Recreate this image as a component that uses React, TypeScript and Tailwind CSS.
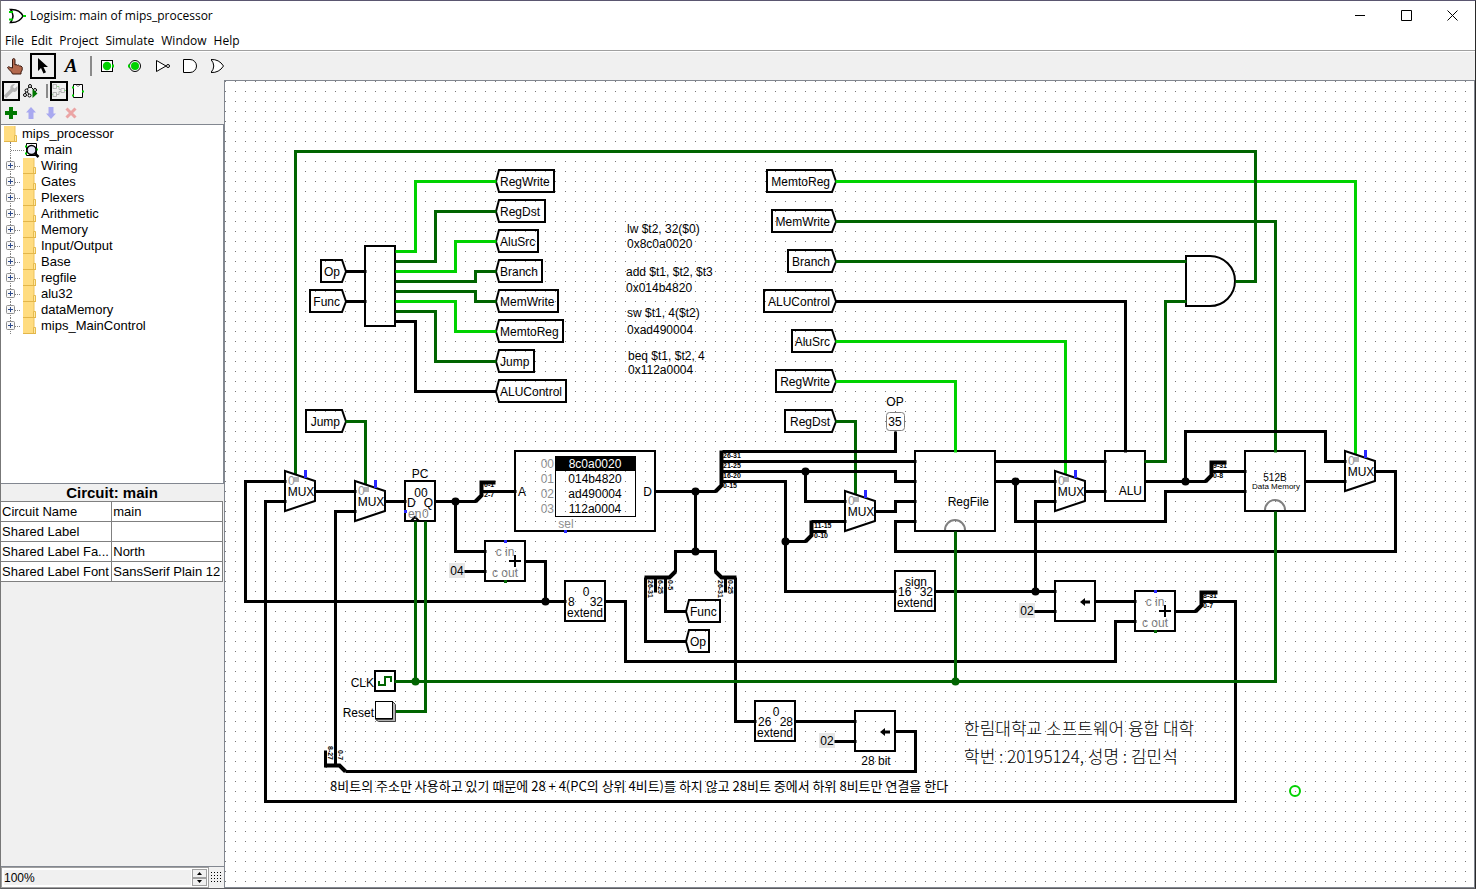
import React from "react";

type Pt = [number, number];

const K = "#000000";
const LOW = "#006400";
const HIGH = "#00d200";
const BLUE = "#2828ff";

const menus = ["File", "Edit", "Project", "Simulate", "Window", "Help"];
const libraries = [
  "Wiring",
  "Gates",
  "Plexers",
  "Arithmetic",
  "Memory",
  "Input/Output",
  "Base",
  "regfile",
  "alu32",
  "dataMemory",
  "mips_MainControl",
];
const attributes: [string, string][] = [
  ["Circuit Name", "main"],
  ["Shared Label", ""],
  ["Shared Label Fa...", "North"],
  ["Shared Label Font", "SansSerif Plain 12"],
];

const wires: [string, Pt[]][] = [
  [HIGH, [[395, 251], [415, 251], [415, 181], [496, 181]]],
  [LOW, [[395, 261], [435, 261], [435, 211], [496, 211]]],
  [HIGH, [[395, 271], [455, 271], [455, 241], [496, 241]]],
  [LOW, [[395, 281], [475, 281], [475, 271], [496, 271]]],
  [LOW, [[395, 291], [475, 291], [475, 301], [496, 301]]],
  [HIGH, [[395, 301], [455, 301], [455, 331], [496, 331]]],
  [LOW, [[395, 311], [435, 311], [435, 361], [496, 361]]],
  [K, [[395, 321], [415, 321], [415, 391], [496, 391]]],
  [K, [[345, 271], [366, 271]]],
  [K, [[345, 301], [366, 301]]],
  [LOW, [[345, 421], [365, 421], [365, 484]]],
  [HIGH, [[835, 181], [1355, 181], [1355, 454]]],
  [LOW, [[835, 221], [1275, 221], [1275, 452]]],
  [LOW, [[835, 261], [1186, 261]]],
  [LOW, [[1235, 281], [1255, 281], [1255, 151], [295, 151], [295, 474]]],
  [K, [[835, 301], [1125, 301], [1125, 452]]],
  [HIGH, [[835, 341], [1065, 341], [1065, 474]]],
  [HIGH, [[835, 381], [955, 381], [955, 452]]],
  [LOW, [[835, 421], [855, 421], [855, 494]]],
  [LOW, [[1144, 461], [1165, 461], [1165, 301], [1186, 301]]],
  [K, [[722, 451], [895, 451], [895, 431]]],
  [K, [[722, 461], [916, 461]]],
  [K, [[722, 471], [895, 471], [895, 481], [916, 481]]],
  [K, [[722, 481], [785, 481], [785, 591], [896, 591]]],
  [K, [[805, 471], [805, 501], [846, 501]]],
  [K, [[785, 541], [806, 541]]],
  [K, [[811, 521], [846, 521]]],
  [K, [[875, 511], [895, 511], [895, 501], [916, 501]]],
  [K, [[916, 521], [895, 521], [895, 551], [1395, 551], [1395, 471], [1375, 471]]],
  [K, [[994, 461], [1106, 461]]],
  [K, [[994, 481], [1056, 481]]],
  [K, [[1015, 481], [1015, 521], [1165, 521], [1165, 491], [1246, 491]]],
  [K, [[1085, 491], [1106, 491]]],
  [K, [[1056, 501], [1035, 501], [1035, 591]]],
  [K, [[1144, 481], [1206, 481]]],
  [K, [[1185, 481], [1185, 431], [1325, 431], [1325, 461], [1346, 461]]],
  [K, [[1211, 471], [1246, 471]]],
  [K, [[1304, 481], [1346, 481]]],
  [K, [[286, 481], [245, 481], [245, 601], [566, 601]]],
  [K, [[286, 501], [265, 501], [265, 801], [1235, 801], [1235, 601], [1202, 601]]],
  [K, [[315, 491], [356, 491]]],
  [K, [[356, 511], [335, 511], [335, 766]]],
  [K, [[385, 501], [406, 501]]],
  [K, [[434, 501], [476, 501]]],
  [K, [[455, 501], [455, 551], [486, 551]]],
  [K, [[481, 491], [516, 491]]],
  [K, [[464, 571], [486, 571]]],
  [K, [[524, 561], [545, 561], [545, 601]]],
  [K, [[654, 491], [716, 491]]],
  [K, [[695, 491], [695, 551]]],
  [K, [[675, 572], [675, 551], [715, 551], [715, 572]]],
  [K, [[645, 577], [645, 641], [686, 641]]],
  [K, [[665, 577], [665, 611], [686, 611]]],
  [K, [[735, 577], [735, 721], [756, 721]]],
  [K, [[604, 601], [625, 601], [625, 661], [1115, 661], [1115, 621], [1136, 621]]],
  [K, [[934, 591], [1056, 591]]],
  [K, [[1034, 611], [1056, 611]]],
  [K, [[1094, 601], [1136, 601]]],
  [K, [[1174, 611], [1196, 611]]],
  [K, [[794, 721], [856, 721]]],
  [K, [[834, 741], [856, 741]]],
  [K, [[894, 731], [915, 731], [915, 771], [345, 771]]],
  [LOW, [[394, 681], [1275, 681], [1275, 511]]],
  [LOW, [[955, 681], [955, 531]]],
  [LOW, [[415, 681], [415, 521]]],
  [LOW, [[394, 711], [425, 711], [425, 521]]],
];

const junctions: [number, number, string][] = [
  [455, 501, K],
  [545, 601, K],
  [695, 491, K],
  [695, 551, K],
  [805, 471, K],
  [785, 541, K],
  [1015, 481, K],
  [1035, 591, K],
  [1185, 481, K],
  [415, 681, LOW],
  [955, 681, LOW],
];

const leftTunnels: [string, number, number, number][] = [
  ["RegWrite", 496, 181, 554],
  ["RegDst", 496, 211, 545],
  ["AluSrc", 496, 241, 538],
  ["Branch", 496, 271, 542],
  ["MemWrite", 496, 301, 558],
  ["MemtoReg", 496, 331, 563],
  ["Jump", 496, 361, 534],
  ["ALUControl", 496, 391, 566],
  ["Func", 686, 611, 720],
  ["Op", 686, 641, 709],
];

const rightTunnels: [string, number, number, number][] = [
  ["Op", 346, 271, 321],
  ["Func", 346, 301, 310],
  ["Jump", 346, 421, 306],
  ["MemtoReg", 836, 181, 767],
  ["MemWrite", 836, 221, 772],
  ["Branch", 836, 261, 788],
  ["ALUControl", 836, 301, 764],
  ["AluSrc", 836, 341, 792],
  ["RegWrite", 836, 381, 776],
  ["RegDst", 836, 421, 785],
];

/* x, y, width, height of every plain component body */
const boxes: [number, number, number, number][] = [
  [365, 246, 30, 80],
  [405, 481, 30, 40],
  [515, 451, 140, 80],
  [485, 541, 40, 40],
  [565, 581, 40, 40],
  [915, 451, 80, 80],
  [1105, 451, 40, 50],
  [1245, 451, 60, 60],
  [895, 571, 40, 40],
  [1055, 581, 40, 40],
  [1135, 591, 40, 40],
  [755, 701, 40, 40],
  [855, 711, 40, 40],
  [375, 671, 20, 20],
];

const notes: [number, number, string][] = [
  [627, 233, "lw $t2, 32($0)"],
  [627, 248, "0x8c0a0020"],
  [626, 276, "add $t1, $t2, $t3"],
  [626, 292, "0x014b4820"],
  [627, 317, "sw $t1, 4($t2)"],
  [627, 334, "0xad490004"],
  [628, 360, "beq $t1, $t2, 4"],
  [628, 374, "0x112a0004"],
];

const bitLabels: [number, number, string][] = [
  [723, 458, "26-31"],
  [723, 468, "21-25"],
  [723, 478, "16-20"],
  [723, 488, "0-15"],
  [484, 487, "0-1"],
  [484, 497, "2-7"],
  [814, 528, "11-15"],
  [814, 538, "0-10"],
  [1213, 468, "9-31"],
  [1213, 478, "0-8"],
  [1203, 598, "8-31"],
  [1203, 608, "0-7"],
];

const verticalBitLabels: [number, number, string][] = [
  [648, 580, "26-31"],
  [658, 580, "6-25"],
  [668, 580, "0-5"],
  [718, 580, "26-31"],
  [728, 580, "0-25"],
  [328, 746, "8-27"],
  [338, 750, "0-7"],
];

function Label({
  x,
  y,
  fill = K,
  anchor = "start",
  children,
}: {
  x: number;
  y: number;
  fill?: string;
  anchor?: "start" | "middle" | "end";
  children: React.ReactNode;
}) {
  return (
    <text x={x} y={y} fill={fill} textAnchor={anchor}>
      {children}
    </text>
  );
}

function Mux({ x, y }: { x: number; y: number }) {
  return (
    <g>
      <path d={`M${x} ${y}l30 10v20l-30 10z`} fill="none" stroke={K} strokeWidth="2" />
      <rect x={x + 9} y={y + 6} width="5" height="5" fill="#b4b4b4" />
      <rect x={x + 19} y={y - 1} width="3" height="8" fill={BLUE} />
      <Label x={x + 3} y={y + 14} fill="#909090">0</Label>
      <Label x={x + 16} y={y + 25} anchor="middle">MUX</Label>
    </g>
  );
}

function Adder({ x, y }: { x: number; y: number }) {
  return (
    <g>
      <Label x={x + 20} y={y + 15} fill="#808080" anchor="middle">c in</Label>
      <Label x={x + 20} y={y + 36} fill="#808080" anchor="middle">c out</Label>
      <path d={`M${x + 24} ${y + 20}h12M${x + 30} ${y + 14}v12`} stroke={K} strokeWidth="2" />
      <rect x={x + 19} y={y - 1} width="3" height="3" fill={BLUE} />
      <rect x={x + 19} y={y + 39} width="3" height="3" fill={LOW} />
    </g>
  );
}

function Extender({ x, y, kind, from, to }: { x: number; y: number; kind: string; from: string; to: string }) {
  return (
    <g>
      <Label x={x + 21} y={y + 15} anchor="middle">{kind}</Label>
      <Label x={x + 3} y={y + 25}>{from}</Label>
      <Label x={x + 38} y={y + 25} anchor="end">{to}</Label>
      <Label x={x + 20} y={y + 36} anchor="middle">extend</Label>
    </g>
  );
}

function Constant({ x, y, value }: { x: number; y: number; value: string }) {
  return (
    <g>
      <rect x={x} y={y} width="16" height="15" fill="#e6e6e6" />
      <Label x={x + 8} y={y + 12} anchor="middle">{value}</Label>
    </g>
  );
}

function ShiftArrow({ x, y }: { x: number; y: number }) {
  return (
    <g>
      <path d={`M${x + 3} ${y}h7`} stroke={K} strokeWidth="3" />
      <path d={`M${x} ${y}l5-4v8z`} fill={K} />
    </g>
  );
}

function Circuit() {
  return (
    <svg
      className="block h-full w-full font-['Liberation_Sans','Noto_Sans_CJK_KR',sans-serif] text-[12px]"
      role="img"
      aria-label="main circuit"
    >
      <defs>
        <pattern id="grid" width="10" height="10" patternUnits="userSpaceOnUse">
          <rect width="1" height="1" fill="#777777" />
        </pattern>
      </defs>
      <rect width="100%" height="100%" fill="url(#grid)" />
      <g transform="translate(-225 -81)">
        {[[449, 563, "04"], [1019, 603, "02"], [819, 733, "02"]].map(([x, y, v]) => (
          <Constant key={`${x}`} x={Number(x)} y={Number(y)} value={String(v)} />
        ))}

        <g fill="none" stroke={K} strokeWidth="2">
          {boxes.map(([x, y, w, h]) => (
            <rect key={`${x}-${y}`} x={x} y={y} width={w} height={h} />
          ))}
          <path d="M1186 256h24a25 25 0 0 1 0 50h-24z" />
          {leftTunnels.map(([name, x, y, r]) => (
            <path key={name} d={`M${x} ${y + 0.5}L${x + 3} ${y - 11}H${r}V${y + 11}H${x + 3}z`} />
          ))}
          {rightTunnels.map(([name, x, y, l]) => (
            <path key={name} d={`M${x} ${y + 0.5}L${x - 4} ${y - 11}H${l}V${y + 11}H${x - 4}z`} />
          ))}
          <path d="M945 530a10 10 0 0 1 20 0M1265 510a10 10 0 0 1 20 0" stroke="#808080" />
          <path d="M411 521l4-4 4 4" />
        </g>

        <g transform="translate(.5 .5)">
          <g fill="none" strokeWidth="3">
            {wires.map(([color, pts], i) => (
              <polyline key={i} points={pts.map((p) => p.join(",")).join(" ")} stroke={color} />
            ))}
          </g>
          {junctions.map(([x, y, color]) => (
            <circle key={`${x}-${y}`} cx={x} cy={y} r="4" fill={color} />
          ))}
          <g fill="none" stroke={K} strokeWidth="4">
            <path d="M715 491l6-6V450" />
            <path d="M475 501l6-6V482H495" />
            <path d="M805 541l6-6V520" />
            <path d="M1205 481l6-6V462H1226" />
            <path d="M1195 611l6-6V592H1217" />
            <path d="M675 571l-6 6H644" />
            <path d="M715 571l6 6H736" />
            <path d="M345 771l-6-6H325" />
          </g>
          <g fill="none" stroke={K} strokeWidth="3">
            <path d="M811 531h15M655 577v15M725 577v15M325 767V750" />
          </g>
        </g>

        {leftTunnels.map(([name, x, y]) => (
          <Label key={name} x={x + 4} y={y + 5}>{name}</Label>
        ))}
        {rightTunnels.map(([name, x, y]) => (
          <Label key={name} x={x - 6} y={y + 5} anchor="end">{name}</Label>
        ))}

        <Mux x={285} y={471} />
        <Mux x={355} y={481} />
        <Mux x={845} y={491} />
        <Mux x={1055} y={471} />
        <Mux x={1345} y={451} />
        <Adder x={485} y={541} />
        <Adder x={1135} y={591} />
        <Extender x={565} y={581} kind="0" from="8" to="32" />
        <Extender x={895} y={571} kind="sign" from="16" to="32" />
        <Extender x={755} y={701} kind="0" from="26" to="28" />
        <ShiftArrow x={1080} y={602} />
        <ShiftArrow x={880} y={732} />

        <Label x={420} y={478} anchor="middle">PC</Label>
        <Label x={421} y={497} anchor="middle">00</Label>
        <Label x={407} y={507}>D</Label>
        <Label x={433} y={507} anchor="end">Q</Label>
        <Label x={408} y={518} fill="#808080">en</Label>
        <Label x={422} y={518} fill="#808080">0</Label>
        <rect x="404" y="510" width="3" height="3" fill={BLUE} />

        <rect x="555.5" y="456.5" width="80" height="60" fill="none" stroke={K} />
        <rect x="555" y="456" width="81" height="15" fill={K} />
        {["8c0a0020", "014b4820", "ad490004", "112a0004"].map((word, i) => (
          <g key={word}>
            <Label x={554} y={468 + i * 15} fill="#909090" anchor="end">{`0${i}`}</Label>
            <Label x={595} y={468 + i * 15} fill={i === 0 ? "#ffffff" : K} anchor="middle">{word}</Label>
          </g>
        ))}
        <Label x={518} y={496}>A</Label>
        <Label x={652} y={496} anchor="end">D</Label>
        <Label x={566} y={528} fill="#909090" anchor="middle">sel</Label>
        <rect x="564" y="530" width="3" height="3" fill={BLUE} />

        <Label x={895} y={406} anchor="middle">OP</Label>
        <rect x="886.5" y="412.5" width="18" height="18" rx="3" fill="none" stroke="#808080" />
        <Label x={895} y={426} anchor="middle">35</Label>
        <Label x={989} y={506} anchor="end">RegFile</Label>
        <Label x={1142} y={495} anchor="end">ALU</Label>
        <text x="1275" y="481" textAnchor="middle" className="text-[10px]">512B</text>
        <text x="1276" y="489" textAnchor="middle" className="text-[8px]">Data Memory</text>

        <Label x={374} y={687} anchor="end">CLK</Label>
        <path d="M379 681v4h6v-8h6v5" fill="none" stroke={LOW} strokeWidth="2" />
        <Label x={374} y={717} anchor="end">Reset</Label>
        <path d="M375.500 719.500l3 2h17v-17l-3-3v18z" fill="#b4b4b4" stroke="#404040" />
        <rect x="375.5" y="701.5" width="17" height="17" fill="#ffffff" stroke={K} />

        <Label x={876} y={765} anchor="middle">28 bit</Label>
        <circle cx="1295" cy="791" r="5" fill="none" stroke={HIGH} strokeWidth="2" />

        {notes.map(([x, y, s]) => (
          <Label key={s} x={x} y={y}>{s}</Label>
        ))}
        <g className="text-[7px] font-bold">
          {bitLabels.map(([x, y, s]) => (
            <Label key={`${x}-${y}`} x={x} y={y}>{s}</Label>
          ))}
          {verticalBitLabels.map(([x, y, s]) => (
            <text key={`${x}-${y}`} transform={`translate(${x} ${y}) rotate(90)`}>{s}</text>
          ))}
        </g>
        <g className="font-['Noto_Sans_CJK_KR',sans-serif] text-[17px] font-light">
          <text x="964" y="735">한림대학교 소프트웨어 융합 대학</text>
          <text x="964" y="763">학번 : 20195124, 성명 : 김민석</text>
        </g>
        <text x="330" y="791" className="font-['Noto_Sans_CJK_KR',sans-serif] text-[13px]">
          8비트의 주소만 사용하고 있기 때문에 28 + 4(PC의 상위 4비트)를 하지 않고 28비트 중에서 하위 8비트만 연결을 한다
        </text>
      </g>
    </svg>
  );
}

function Folder() {
  return (
    <svg className="h-4 w-[13px] shrink-0" viewBox="0 0 13 16" aria-hidden="true">
      <path d="M0 0h11v9l2 1v5H0z" fill="#ffdc80" />
      <path d="M0 15h13v1H0z" fill="#e3b64a" />
      <path d="M10.500 9.500h2v6h-2z" fill="#ffe9a8" stroke="#dfb13c" strokeWidth=".8" />
      <path d="M11 0v9" stroke="#edc35c" />
    </svg>
  );
}

function ToolButton({ label, selected = false, children }: { label: string; selected?: boolean; children: React.ReactNode }) {
  return (
    <button
      type="button"
      aria-label={label}
      aria-pressed={selected}
      className={
        selected
          ? "flex h-[26px] w-[26px] items-center justify-center border-2 border-black"
          : "flex h-[26px] w-[26px] items-center justify-center"
      }
    >
      {children}
    </button>
  );
}

function SmallButton({ label, selected = false, children }: { label: string; selected?: boolean; children: React.ReactNode }) {
  return (
    <button
      type="button"
      aria-label={label}
      className={
        selected
          ? "flex h-5 w-[18px] items-center justify-center border-2 border-black"
          : "flex h-5 w-[18px] items-center justify-center"
      }
    >
      {children}
    </button>
  );
}

function Toolbar() {
  return (
    <div role="toolbar" aria-label="Tools" className="flex h-[28px] shrink-0 items-center gap-[2px] bg-[#f0f0f0] pl-px">
      <ToolButton label="Poke">
        <svg width="18" height="18" viewBox="0 0 18 18" aria-hidden="true">
          <path d="M6.500 11V3q0-1.500 1.200-1.500T9 3v5l1-.5 1.500.8 1-.3 1.200 1 1.300 0 1.200 1.200V13l-1.200 2v2H6.500l-1-2L3 12.500 1.500 10.500l1.200-.8L4.500 10.500z" fill="#b4694d" stroke="#3c1a10" />
        </svg>
      </ToolButton>
      <ToolButton label="Edit" selected>
        <svg width="18" height="18" viewBox="0 0 18 18" aria-hidden="true">
          <path d="M4 1v13l3-3 2.500 5.500 2.500-1.200L9.500 10H14z" fill="#000" />
        </svg>
      </ToolButton>
      <ToolButton label="Text">
        <span className="font-['Liberation_Serif',serif] text-[19px] leading-5 font-bold italic">A</span>
      </ToolButton>
      <span className="ml-1 h-5 w-[2px] bg-[#8a8a8a]" />
      <ToolButton label="Input pin">
        <svg width="14" height="14" viewBox="0 0 14 14" aria-hidden="true">
          <rect x="1.500" y="1.500" width="11" height="11" fill="#fff" stroke="#000" />
          <circle cx="7" cy="7" r="4.200" fill={HIGH} />
          <path d="M12 7h2" stroke={HIGH} strokeWidth="3" />
        </svg>
      </ToolButton>
      <ToolButton label="Output pin">
        <svg width="14" height="14" viewBox="0 0 14 14" aria-hidden="true">
          <circle cx="7" cy="7" r="5.500" fill="#fff" stroke="#000" />
          <circle cx="7" cy="7" r="4" fill={HIGH} />
          <path d="M0 7h2" stroke={HIGH} strokeWidth="3" />
        </svg>
      </ToolButton>
      <ToolButton label="NOT gate">
        <svg width="16" height="14" viewBox="0 0 16 14" aria-hidden="true">
          <path d="M1.500 1.500v11L11 7z" fill="#fff" stroke="#000" />
          <circle cx="13" cy="7" r="1.500" fill="#fff" stroke="#000" />
        </svg>
      </ToolButton>
      <ToolButton label="AND gate">
        <svg width="16" height="14" viewBox="0 0 16 14" aria-hidden="true">
          <path d="M.5.500h6.500a6.500 6.500 0 0 1 0 13H.5z" fill="#fff" stroke="#000" />
        </svg>
      </ToolButton>
      <ToolButton label="OR gate">
        <svg width="16" height="14" viewBox="0 0 16 14" aria-hidden="true">
          <path d="M0 .5q8-.5 12.500 6.500Q8 14 0 13.500q5.500-6.500 0-13z" fill="#fff" stroke="#000" />
        </svg>
      </ToolButton>
    </div>
  );
}

function ExplorerBars() {
  return (
    <div className="flex h-[44px] shrink-0 flex-col gap-[2px]">
      <div className="flex items-center gap-[2px] pt-px pl-px">
        <SmallButton label="Show toolbox" selected>
          <svg width="14" height="16" viewBox="0 0 14 16" aria-hidden="true">
            <path d="M1 14L8 7" stroke="#b4b4b4" strokeWidth="3.500" />
            <path d="M13.500 3l-2.800 2.500-2-1.500L11 1Q7.500.5 6.500 3.500T9 8.500t4.500-2.500z" fill="#b4b4b4" />
          </svg>
        </SmallButton>
        <SmallButton label="Show simulation">
          <svg width="16" height="16" viewBox="0 0 16 16" aria-hidden="true">
            <path d="M7 3L3.500 7 2 12M4 8l2 4M7 3l4 4v3" fill="none" stroke="#000" />
            <circle cx="7" cy="3" r="1.500" fill="#fff" stroke="#000" />
            <circle cx="3.500" cy="7.500" r="1.500" fill="#fff" stroke="#000" />
            <circle cx="2" cy="12" r="1.500" fill="#fff" stroke="#000" />
            <circle cx="6.500" cy="12.500" r="1.500" fill="#fff" stroke="#000" />
            <circle cx="12" cy="7" r="1.500" fill="#fff" stroke="#000" />
            <path d="M9.500 6v9l5-4.500z" fill="#007800" />
          </svg>
        </SmallButton>
        <span className="ml-1 h-[14px] w-[2px] bg-[#8a8a8a]" />
        <SmallButton label="Edit circuit layout" selected>
          <svg width="14" height="16" viewBox="0 0 14 16" aria-hidden="true">
            <path d="M1 1.500h3.500v4H1zM1 9.500h3.500v4H1zM9 5.500h3.500v4H9zM5 3.500h2v3h2M5 11.500h2v-3h2" fill="none" stroke="#b4b4b4" />
            <path d="M5 3.500h2M12 7.500h2M0 11.500h1" stroke="#8fd08f" />
          </svg>
        </SmallButton>
        <SmallButton label="Edit appearance">
          <svg width="14" height="16" viewBox="0 0 14 16" aria-hidden="true">
            <path d="M1.500 1.500h9v13h-9z" fill="#fff" stroke="#000" />
            <path d="M4 2q2 3 4 0" fill="none" stroke="#808080" />
            <path d="M0 4.500h2M0 12.500h2M10 8.500h2" stroke={HIGH} strokeWidth="2" />
          </svg>
        </SmallButton>
      </div>
      <div className="flex items-center gap-[2px] pl-px">
        <SmallButton label="Add circuit">
          <svg width="12" height="12" viewBox="0 0 12 12" aria-hidden="true">
            <path d="M6 0v12M0 6h12" stroke="#007800" strokeWidth="4" />
          </svg>
        </SmallButton>
        <SmallButton label="Move up">
          <svg width="12" height="12" viewBox="0 0 12 12" aria-hidden="true">
            <path d="M6 0l5 5.500H8.500V12h-5V5.500H1z" fill="#a9a9f0" />
          </svg>
        </SmallButton>
        <SmallButton label="Move down">
          <svg width="12" height="12" viewBox="0 0 12 12" aria-hidden="true">
            <path d="M6 12l5-5.500H8.500V0h-5v6.500H1z" fill="#a9a9f0" />
          </svg>
        </SmallButton>
        <SmallButton label="Remove circuit">
          <svg width="12" height="12" viewBox="0 0 12 12" aria-hidden="true">
            <path d="M1.500 1.500l9 9M10.500 1.500l-9 9" stroke="#eba5a5" strokeWidth="3" />
          </svg>
        </SmallButton>
      </div>
    </div>
  );
}

function Tree() {
  return (
    <div className="h-[360px] shrink-0 border border-l-0 border-[#828790] bg-white pt-px text-[13px] leading-4">
      <div className="flex h-4 items-center gap-[5px] pl-[3px]">
        <Folder />
        <span>mips_processor</span>
      </div>
      <ul className="ml-[9px] w-fit">
        <li className="flex h-4 items-center border-l border-dotted border-[#808080]">
          <span className="w-[13px] border-t border-dotted border-[#808080]" />
          <svg width="16" height="16" viewBox="0 0 16 16" aria-hidden="true">
            <path d="M2.500 1.500h10v12h-10z" fill="#fff" stroke="#000" />
            <path d="M1 4.500h2M1 11.500h2M12 7.500h2" stroke={HIGH} strokeWidth="2" />
            <circle cx="7.500" cy="8" r="4.500" fill="#e6e6fa" stroke="#000" strokeWidth="1.500" />
            <path d="M10.500 11l4 4" stroke="#000" strokeWidth="2.500" />
          </svg>
          <span className="ml-1">main</span>
        </li>
        {libraries.map((name) => (
          <li key={name} className="-ml-1 flex h-4 items-center">
            <button type="button" aria-label={`Expand ${name}`} className="flex h-4 w-[9px] items-center">
              <svg width="9" height="16" viewBox="0 0 9 16" aria-hidden="true">
                <path d="M4.500 0v4M4.500 13v3" stroke="#808080" strokeDasharray="1 1" />
                <rect x=".5" y="3.500" width="8" height="8" rx="1" fill="#f8f8f8" stroke="#919191" />
                <path d="M2 7.500h5M4.500 5v5" stroke="#2c4a8c" />
              </svg>
            </button>
            <span className="mr-[3px] w-[5px] border-t border-dotted border-[#808080]" />
            <Folder />
            <span className="ml-[5px]">{name}</span>
          </li>
        ))}
      </ul>
    </div>
  );
}

function AttributeTable() {
  return (
    <div className="flex min-h-0 flex-1 flex-col pr-px">
      <h2 className="h-[17px] text-center text-[15px] leading-[17px] font-bold">Circuit: main</h2>
      <table className="w-full table-fixed border-collapse text-[13px] leading-[19px]">
        <tbody>
          {attributes.map(([name, value]) => (
            <tr key={name} className="h-5 bg-white">
              <th scope="row" className="h-5 border border-l-0 border-[#808080] p-0 pl-px text-left font-normal whitespace-nowrap">
                {name}
              </th>
              <td className="h-5 border border-[#808080] p-0 pl-px whitespace-nowrap">{value}</td>
            </tr>
          ))}
        </tbody>
      </table>
    </div>
  );
}

function ZoomBar() {
  return (
    <div className="flex h-[22px] shrink-0 items-stretch border-t border-[#828790]">
      <div className="flex min-w-0 flex-1 border border-[#a0a0a0] bg-white p-px">
        <input
          aria-label="Zoom"
          defaultValue="100%"
          className="min-w-0 flex-1 border border-white bg-[#f0f0f0] text-[12px] leading-4 outline-none"
        />
        <div className="flex w-[15px] flex-col">
          <button type="button" aria-label="Zoom in" className="flex flex-1 items-center justify-center border border-[#a0a0a0] bg-[#f0f0f0]">
            <svg width="5" height="3" viewBox="0 0 5 3" aria-hidden="true"><path d="M0 3l2.500-3L5 3z" /></svg>
          </button>
          <button type="button" aria-label="Zoom out" className="flex flex-1 items-center justify-center border border-[#a0a0a0] bg-[#f0f0f0]">
            <svg width="5" height="3" viewBox="0 0 5 3" aria-hidden="true"><path d="M0 0l2.500 3L5 0z" /></svg>
          </button>
        </div>
      </div>
      <button type="button" aria-label="Toggle grid" className="flex w-[15px] items-center justify-center">
        <svg width="11" height="11" viewBox="0 0 11 11" aria-hidden="true">
          {[0, 3, 6, 9].map((y) => (
            <path key={y} d={`M0 ${y + 0.5}h11`} stroke="#000" strokeDasharray="1 2" />
          ))}
        </svg>
      </button>
    </div>
  );
}

export default function App() {
  return (
    <div className="flex h-screen flex-col overflow-hidden border border-t-[#5a5670] border-r-[#2a2a2a] border-b-[#5c5c60] border-l-[#777777] bg-[#f0f0f0] font-['Liberation_Sans',sans-serif] text-black">
      <header className="shrink-0 border-b border-[#a0a0a0] bg-white font-['Open_Sans',sans-serif] text-[12px]">
        <div className="flex h-[29px] items-center">
          <svg className="ml-[7px]" width="18" height="16" viewBox="0 0 18 16" aria-hidden="true">
            <path d="M2.500 1.500q9-.5 12.500 6.500-3.500 7-12.500 6.500 5-6.500 0-13z" fill="#fff" stroke="#000" strokeWidth="1.500" />
            <path d="M1 4h4M1 11.500h4M15 8h3" stroke={HIGH} strokeWidth="2" />
          </svg>
          <h1 className="ml-1 flex-1">Logisim: main of mips_processor</h1>
          <div className="flex h-full">
            <button type="button" aria-label="Minimize" className="flex w-[46px] items-center justify-center">
              <svg width="11" height="11" viewBox="0 0 11 11" aria-hidden="true"><path d="M0 5.500h10" stroke="#000" /></svg>
            </button>
            <button type="button" aria-label="Maximize" className="flex w-[46px] items-center justify-center">
              <svg width="11" height="11" viewBox="0 0 11 11" aria-hidden="true"><path d="M.5.500h10v10H.500z" fill="none" stroke="#000" /></svg>
            </button>
            <button type="button" aria-label="Close" className="flex w-[46px] items-center justify-center">
              <svg width="11" height="11" viewBox="0 0 11 11" aria-hidden="true"><path d="M.5.500l10 10M10.500.500l-10 10" stroke="#000" /></svg>
            </button>
          </div>
        </div>
        <nav aria-label="Main menu" className="flex h-5 items-end gap-[7px] pl-1 leading-[18px]">
          {menus.map((m) => (
            <button key={m} type="button">{m}</button>
          ))}
        </nav>
      </header>
      <div className="h-px shrink-0 bg-white" />
      <Toolbar />
      <main className="flex min-h-0 flex-1">
        <aside className="flex w-[223px] shrink-0 flex-col">
          <ExplorerBars />
          <Tree />
          <AttributeTable />
          <ZoomBar />
        </aside>
        <section className="min-w-0 flex-1 border border-[#828790] bg-white">
          <Circuit />
        </section>
      </main>
    </div>
  );
}
